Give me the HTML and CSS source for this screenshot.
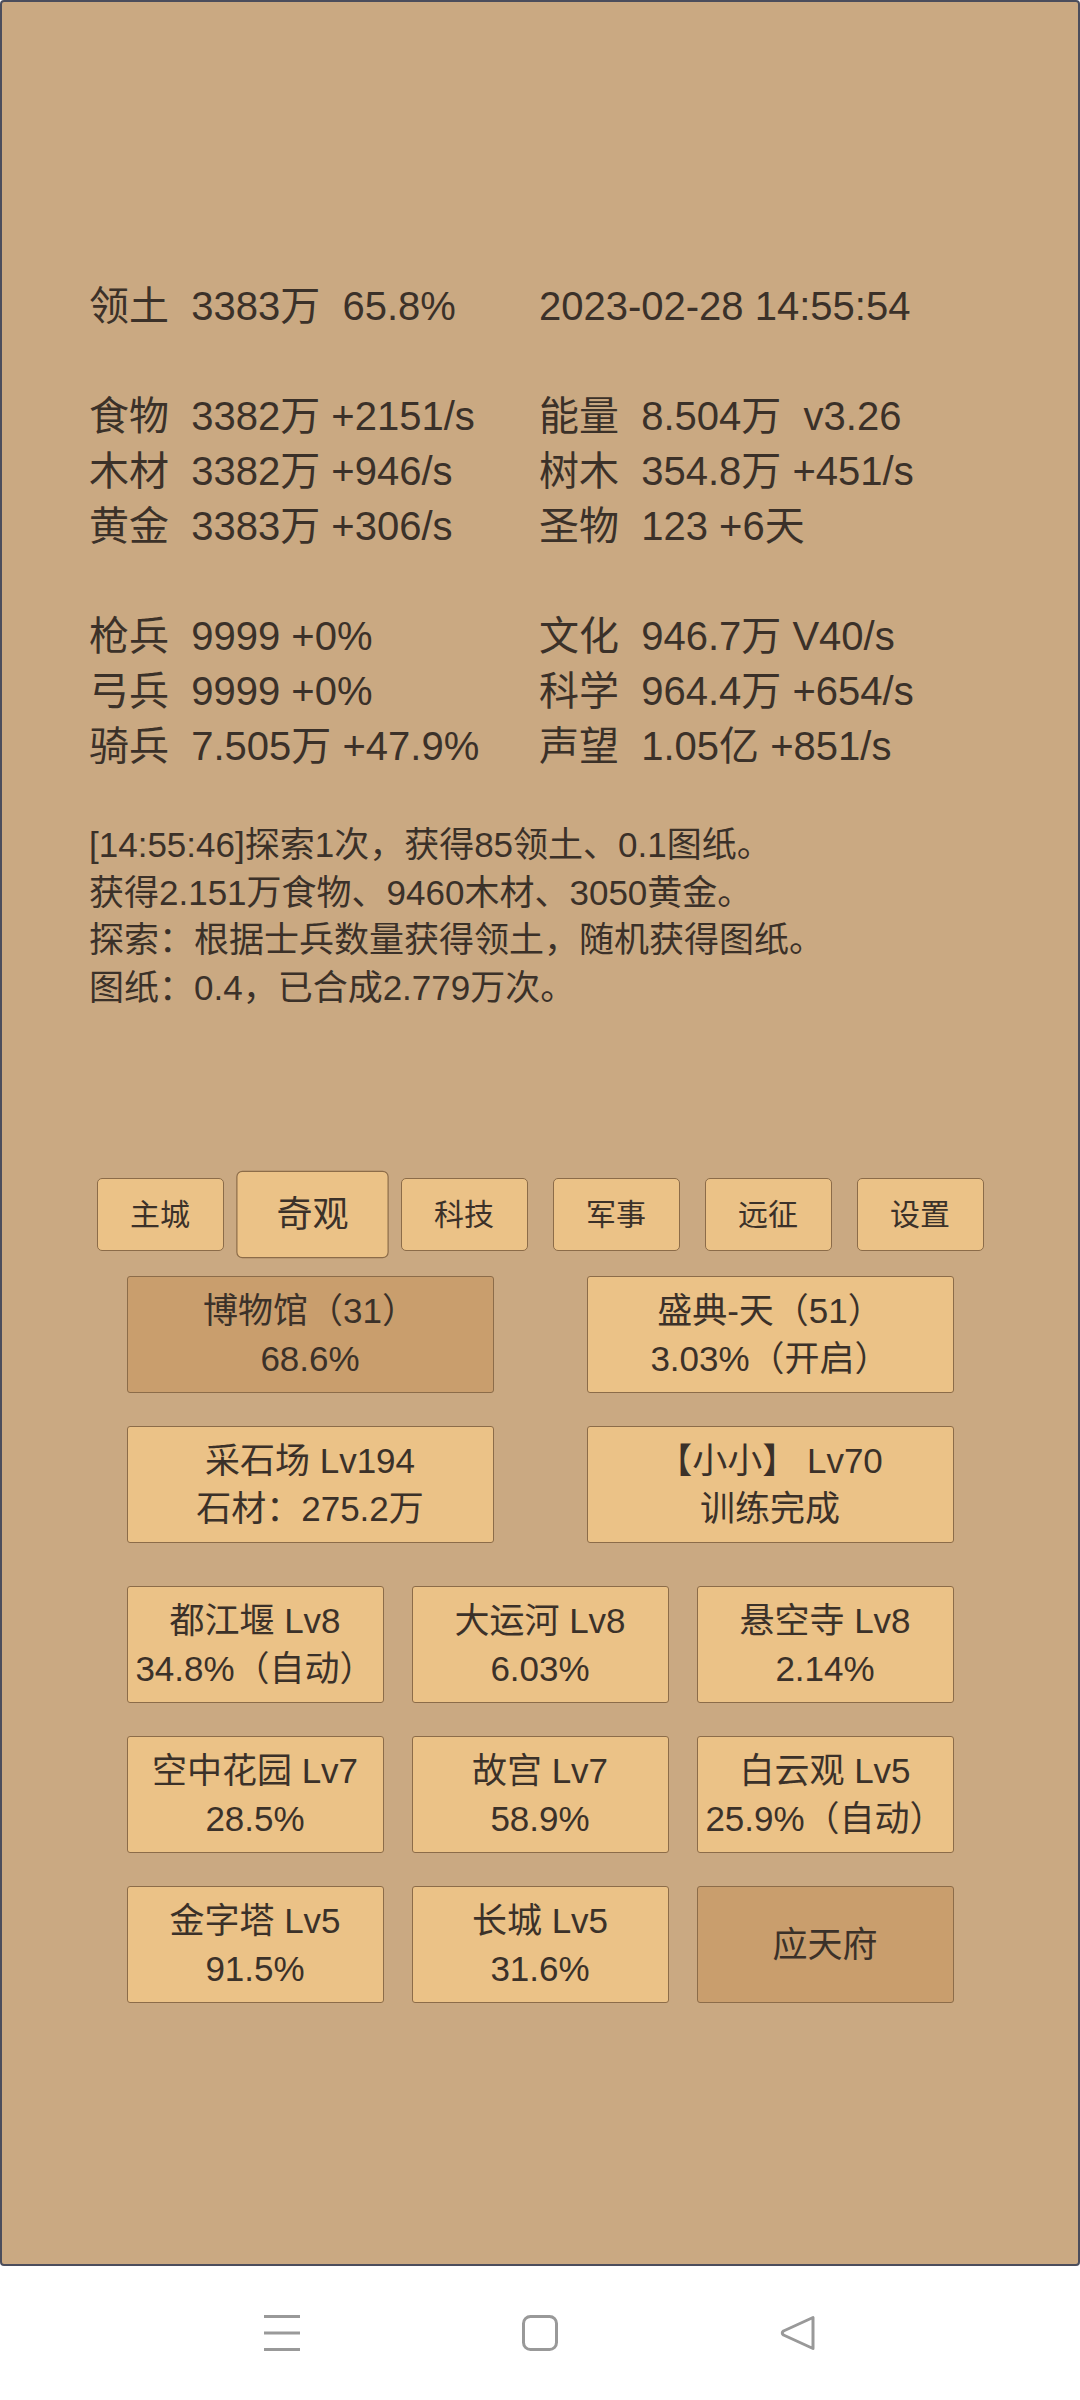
FILE: index.html
```html
<!DOCTYPE html>
<html lang="zh-CN">
<head>
  <meta charset="UTF-8" />
  <meta name="viewport" content="width=device-width, initial-scale=1" />
  <title>奇观</title>
  <link rel="stylesheet" href="styles.css">
</head>
<body>

  <div class="tela">

    <!-- recursos -->
    <div class="stats">
      <div class="grupo">
        <span>领土  3383万  65.8%</span>
        <span>2023-02-28 14:55:54</span>
      </div>
      <div class="grupo">
        <span>食物  3382万 +2151/s</span>
        <span>能量  8.504万  v3.26</span>
        <span>木材  3382万 +946/s</span>
        <span>树木  354.8万 +451/s</span>
        <span>黄金  3383万 +306/s</span>
        <span>圣物  123 +6天</span>
      </div>
      <div class="grupo">
        <span>枪兵  9999 +0%</span>
        <span>文化  946.7万 V40/s</span>
        <span>弓兵  9999 +0%</span>
        <span>科学  964.4万 +654/s</span>
        <span>骑兵  7.505万 +47.9%</span>
        <span>声望  1.05亿 +851/s</span>
      </div>
    </div>

    <div class="log">
      <p>[14:55:46]探索1次，获得85领土、0.1图纸。</p>
      <p>获得2.151万食物、9460木材、3050黄金。</p>
      <p>探索：根据士兵数量获得领土，随机获得图纸。</p>
      <p>图纸：0.4，已合成2.779万次。</p>
    </div>

    <div class="abas">
      <button class="aba">主城</button>
      <button class="aba ativa">奇观</button>
      <button class="aba">科技</button>
      <button class="aba">军事</button>
      <button class="aba">远征</button>
      <button class="aba">设置</button>
    </div>

    <div class="cartoes duas">
      <div class="cartao escuro"><span>博物馆（31）</span><span>68.6%</span></div>
      <div class="cartao"><span>盛典-天（51）</span><span>3.03%（开启）</span></div>
      <div class="cartao"><span>采石场 Lv194</span><span>石材：275.2万</span></div>
      <div class="cartao"><span>【小小】 Lv70</span><span>训练完成</span></div>
    </div>

    <div class="cartoes tres">
      <div class="cartao"><span>都江堰 Lv8</span><span>34.8%（自动）</span></div>
      <div class="cartao"><span>大运河 Lv8</span><span>6.03%</span></div>
      <div class="cartao"><span>悬空寺 Lv8</span><span>2.14%</span></div>
      <div class="cartao"><span>空中花园 Lv7</span><span>28.5%</span></div>
      <div class="cartao"><span>故宫 Lv7</span><span>58.9%</span></div>
      <div class="cartao"><span>白云观 Lv5</span><span>25.9%（自动）</span></div>
      <div class="cartao"><span>金字塔 Lv5</span><span>91.5%</span></div>
      <div class="cartao"><span>长城 Lv5</span><span>31.6%</span></div>
      <div class="cartao escuro"><span>应天府</span></div>
    </div>

  </div>

  <!-- barra de navegação do sistema -->
  <div class="navbar">
    <svg width="36" height="36" viewBox="0 0 36 36">
      <path d="M0 1.5H36M0 18H36M0 34.5H36" stroke="#999" stroke-width="3" fill="none"/>
    </svg>
    <svg width="36" height="36" viewBox="0 0 36 36">
      <rect x="1.5" y="1.5" width="33" height="33" rx="7" stroke="#999" stroke-width="3" fill="none"/>
    </svg>
    <svg width="36" height="36" viewBox="0 0 36 36">
      <path d="M33 2.5V33.5L3.5 20Q1 18 3.5 16Z" stroke="#999" stroke-width="3" stroke-linejoin="round" fill="none"/>
    </svg>
  </div>

</body>
</html>
```

FILE: styles.css
```css
html, body {
  margin: 0; padding: 0;
  background: white;
  font-family: 'Liberation Sans', 'Noto Sans CJK SC', sans-serif;
  color: #3b3129;
}

.tela {
  height: 2266px;
  box-sizing: border-box;
  border: 2px solid #4b4d5c;
  border-radius: 4px;
  background: #caa982;
  padding-top: 277px;
}

/* recursos */
.stats {
  padding-left: 87px;
  font-size: 40px;
  line-height: 55px;
}

.grupo {
  display: grid;
  grid-template-columns: 450px 1fr;
  margin-bottom: 55px;
  white-space: pre;
}

.grupo:last-child {
  margin-bottom: 0;
}

.log {
  margin-top: 47px;
  padding-left: 87px;
  font-size: 35px;
  line-height: 47.5px;
}

.log p {
  margin: 0;
}

/* abas */
.abas {
  margin-top: 167px;
  display: flex;
  justify-content: center;
  gap: 25px;
}

.aba {
  width: 127px;
  height: 73px;
  padding: 0 0 5px;
  background: #ebc287;
  border: 1px solid #8c6c49;
  border-radius: 5px;
  font-family: inherit;
  font-size: 30px;
  color: #3b3129;
}

.aba.ativa {
  transform: scale(1.2);
}

/* cartões */
.cartoes {
  width: 827px;
  margin: 0 auto;
  display: grid;
  row-gap: 33px;
}

.cartoes.duas {
  margin-top: 25px;
  grid-template-columns: repeat(2, 367px);
  column-gap: 93px;
}

.cartoes.tres {
  margin-top: 43px;
  grid-template-columns: repeat(3, 1fr);
  column-gap: 28px;
}

.cartao {
  height: 117px;
  box-sizing: border-box;
  background: #ebc287;
  border: 1px solid #8c6c49;
  border-radius: 3px;
  display: flex;
  flex-direction: column;
  justify-content: center;
  align-items: center;
  font-size: 35px;
  line-height: 48px;
  white-space: nowrap;
}

.cartao.escuro {
  background: #c99e6d;
}

/* navbar */
.navbar {
  height: 134px;
  display: flex;
  justify-content: center;
  align-items: center;
  gap: 222px;
}

.navbar svg {
  display: block;
}
```
